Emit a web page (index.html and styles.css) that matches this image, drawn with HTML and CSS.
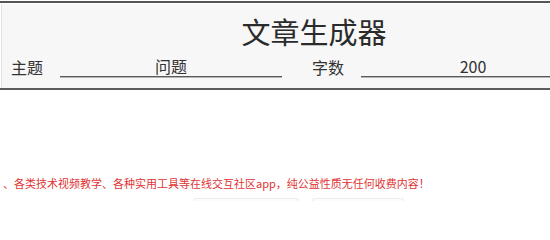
FILE: index.html
```html
<!DOCTYPE html>
<html lang="zh-CN">
<head>
<meta charset="utf-8">
<title>文章生成器</title>
<link rel="stylesheet" href="styles.css">
</head>
<body>
<div class="panel">
  <h1 class="title">文章生成器</h1>
  <div class="row">
    <label class="label">主题</label>
    <input class="field" type="text" value="问题">
    <label class="label label-second">字数</label>
    <input class="field field-wide" type="text" value="200">
  </div>
</div>
<p class="notice">、各类技术视频教学、各种实用工具等在线交互社区app，纯公益性质无任何收费内容！</p>
<div class="buttons">
  <div class="btn btn-a"></div>
  <div class="btn btn-b"></div>
</div>
</body>
</html>
```

FILE: styles.css
```css
html, body {
  margin: 0;
  padding: 0;
  background: #ffffff;
  overflow: hidden;
}
body {
  width: 550px;
  height: 200px;
  padding-top: 1px;
  font-family: "Noto Sans CJK SC", "Noto Sans", sans-serif;
  color: #333333;
}
.panel {
  height: 85px;
  border-top: 2px solid #555555;
  border-bottom: 2px solid #5c5c5c;
  background: #f7f7f7;
  box-shadow: inset 1px 1px 0 #ffffff, inset 2px 0 0 #e2e2e2;
  overflow: hidden;
}
.title {
  margin: 0;
  padding: 11px 0 0 78px;
  font-size: 29px;
  font-weight: normal;
  line-height: 35px;
  text-align: center;
  color: #2b2b2b;
}
.row {
  display: flex;
  align-items: flex-end;
  margin-top: 8px;
  padding-left: 11px;
  white-space: nowrap;
}
.label {
  font-size: 16px;
  line-height: 20px;
  margin-right: 17px;
  color: #333333;
}
.label-second {
  margin-left: 30px;
}
.field {
  flex: none;
  width: 222px;
  height: 19px;
  padding: 0;
  margin: 0;
  border: none;
  border-bottom: 1px solid #5a5a5a;
  box-shadow: 0 1px 0 #b5b5b5;
  background: transparent;
  font-family: "Noto Sans CJK SC", "Noto Sans", sans-serif;
  font-size: 16px;
  line-height: 19px;
  color: #333333;
  text-align: center;
  outline: none;
}
.field-wide {
  width: 224px;
}
.notice {
  margin: 86px 0 0 3px;
  font-size: 11px;
  line-height: 14px;
  color: #e03434;
  white-space: nowrap;
}
.buttons {
  display: flex;
  gap: 13px;
  margin-top: 8px;
  padding-left: 193px;
}
.btn {
  height: 2px;
  border: 1px solid #ececec;
  border-bottom: none;
  border-radius: 4px 4px 0 0;
  background: #fcfcfc;
}
.btn-a {
  width: 104px;
}
.btn-b {
  width: 90px;
}
```
